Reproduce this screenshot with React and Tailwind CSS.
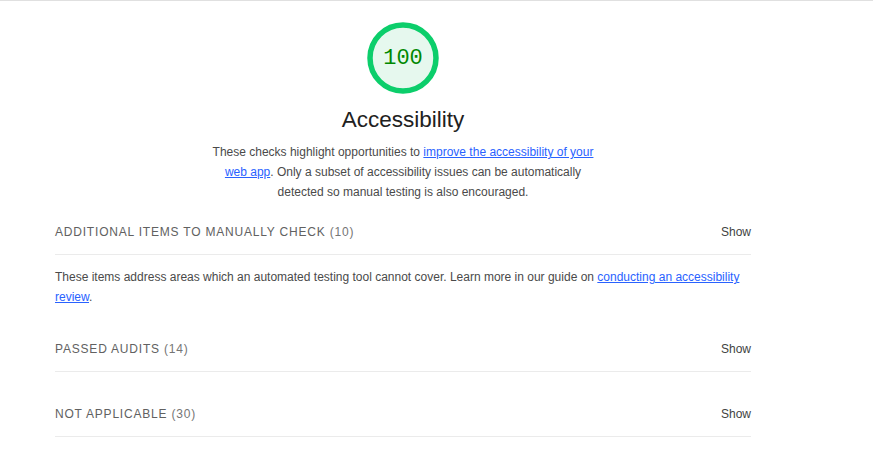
const groups = [
  { title: 'Additional items to manually check', count: 10 },
  { title: 'Passed audits', count: 14 },
  { title: 'Not applicable', count: 30 },
];

function Gauge({ score }) {
  return (
    <div className="relative w-[72px] h-[72px]">
      <svg viewBox="0 0 72 72" className="w-[72px] h-[72px]">
        <circle cx="36" cy="36" r="33" fill="#e6f8ee" stroke="#0cce6b" strokeWidth="5.5" />
      </svg>
      <div className="absolute inset-0 pt-[1px] flex items-center justify-center text-[22px] text-[#008800] [font-family:'Liberation_Mono',monospace]">
        {score}
      </div>
    </div>
  );
}

function GroupHeader({ title, count, className }) {
  return (
    <div className={`flex items-center justify-between border-b border-[#ebebeb] ${className}`}>
      <span className="text-[12px] leading-5 uppercase tracking-[0.8px] text-[#616161]">
        {title} <span className="text-[#757575]">({count})</span>
      </span>
      <span className="text-[12px] leading-5 text-[#424242]">Show</span>
    </div>
  );
}

export default function App() {
  return (
    <div className="min-h-screen bg-white border-t border-[#e0e0e0] [font-family:'Liberation_Sans',Arial,sans-serif]">
      <div className="ml-[55px] w-[696px]">
        <div className="flex flex-col items-center">
          <div className="mt-[21px]">
            <Gauge score={100} />
          </div>
          <h1 className="mt-[12px] text-[22.5px] leading-[28px] text-[#212121]">Accessibility</h1>
          <p className="mt-[8px] w-[400px] text-center text-[12px] leading-5 text-[#4a4a4a]">
            These checks highlight opportunities to{' '}
            <a href="#" className="text-[#2962ff] underline">improve the accessibility of your web app</a>. Only a subset of
            accessibility issues can be automatically detected so manual testing is also encouraged.
          </p>
        </div>

        <GroupHeader title={groups[0].title} count={groups[0].count} className="mt-[20px] pb-[12px]" />
        <p className="mt-[12px] text-[12px] leading-5 text-[#4a4a4a]">
          These items address areas which an automated testing tool cannot cover. Learn more in our guide on{' '}
          <a href="#" className="text-[#2962ff] underline">conducting an accessibility review</a>.
        </p>

        <GroupHeader title={groups[1].title} count={groups[1].count} className="mt-[32px] pb-[12px]" />
        <GroupHeader title={groups[2].title} count={groups[2].count} className="pt-[32px] pb-[12px]" />
      </div>
    </div>
  );
}
